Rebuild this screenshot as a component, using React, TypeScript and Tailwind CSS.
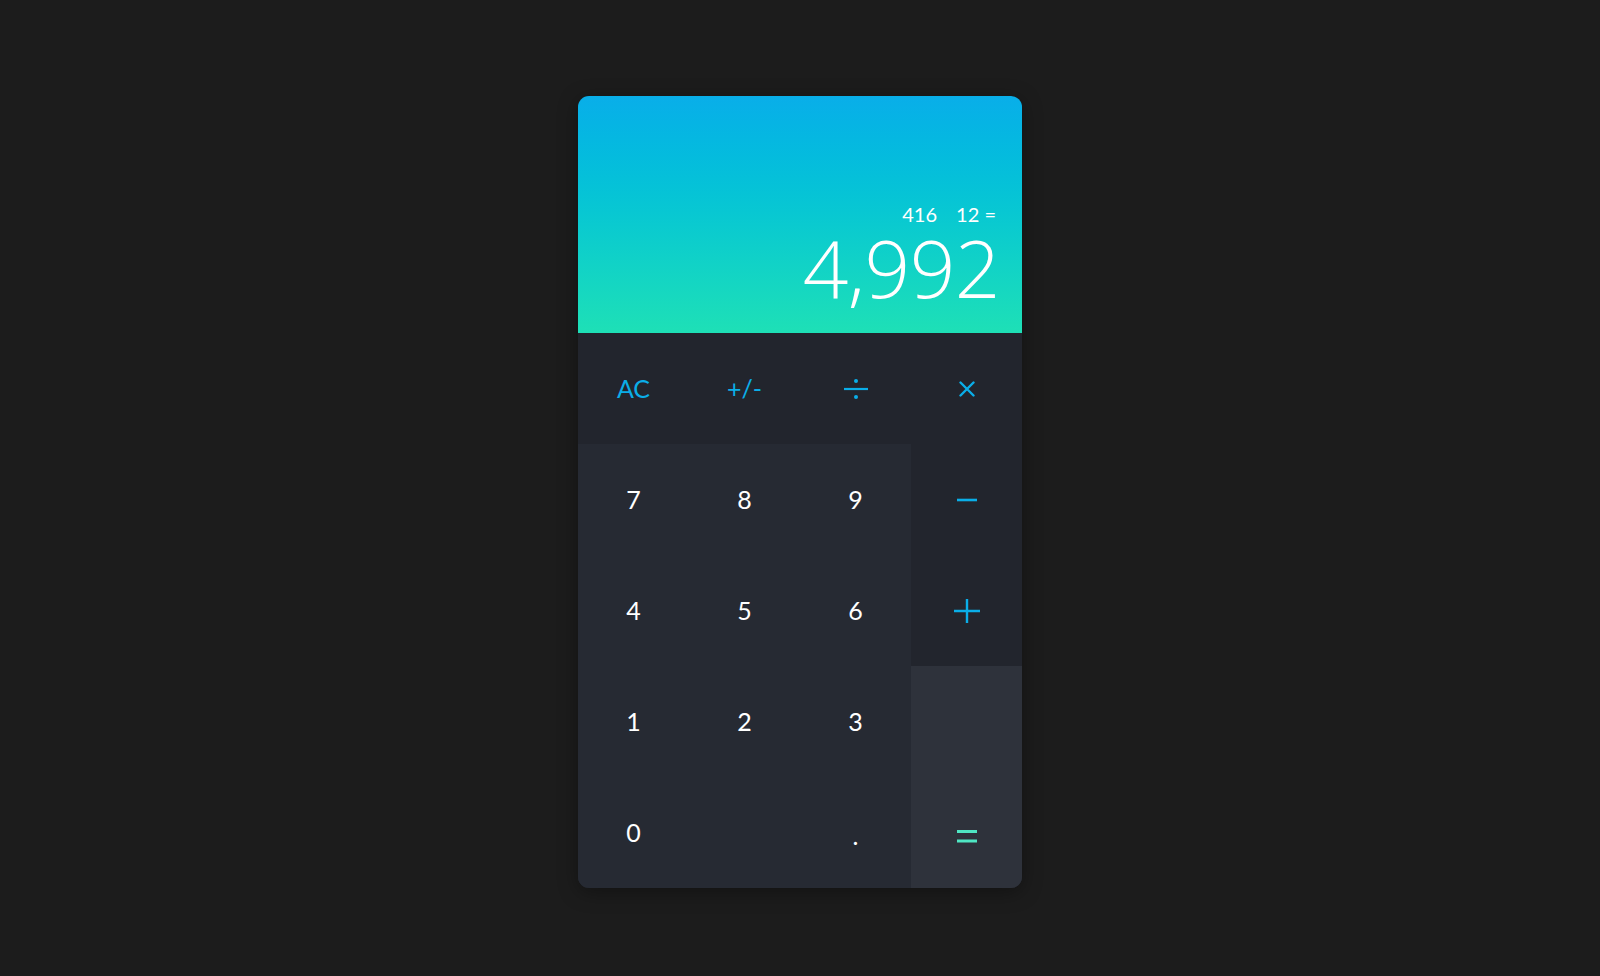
import React from 'react';

const font = { fontFamily: 'Lato, "Noto Sans", sans-serif' };

// --- Operator glyphs ---
const Times = () => (
  <svg width="16" height="16" viewBox="0 0 16 16" fill="none">
    <path d="M1.5 1.5 L14.5 14.5 M14.5 1.5 L1.5 14.5" stroke="#0aaee8" strokeWidth="2.4" strokeLinecap="round" />
  </svg>
);

const Minus = () => (
  <svg width="20" height="4" viewBox="0 0 20 4" fill="none">
    <path d="M0 2 H20" stroke="#0aaee8" strokeWidth="2.6" />
  </svg>
);

const Plus = () => (
  <svg width="26" height="24" viewBox="0 0 26 24" fill="none">
    <path d="M0 12 H26 M13 0 V24" stroke="#0aaee8" strokeWidth="2.4" />
  </svg>
);

const Divide = () => (
  <svg width="24" height="20" viewBox="0 0 24 20" fill="none">
    <path d="M0 10 H24" stroke="#0aaee8" strokeWidth="2.2" />
    <circle cx="12" cy="2" r="2" fill="#0aaee8" />
    <circle cx="12" cy="18" r="2" fill="#0aaee8" />
  </svg>
);

const Equals = () => (
  <svg width="20" height="13" viewBox="0 0 20 13" fill="none">
    <path d="M0 1.6 H20 M0 11 H20" stroke="#4fe6c3" strokeWidth="3" />
  </svg>
);

const Key: React.FC<{ children: React.ReactNode; className?: string }> = ({ children, className }) => (
  <button className={`flex h-[111px] items-center justify-center ${className ?? ''}`}>{children}</button>
);

const digitRows = [
  ['7', '8', '9'],
  ['4', '5', '6'],
  ['1', '2', '3'],
];

export default function App() {
  return (
    <div className="min-h-screen bg-[#1c1c1c] flex items-start justify-center pt-[96px]" style={font}>
      <div className="w-[444px] rounded-[11px] overflow-hidden shadow-[0_4px_20px_rgba(0,0,0,0.35)]">
        {/* --- Display --- */}
        <div className="h-[237px] bg-gradient-to-b from-[#09aee9] to-[#1ee0b6] flex flex-col items-end justify-end pr-[22px] pb-[35px] text-white">
          <div className="flex text-[20px] leading-none mr-[4px]">
            <span>416</span>
            <span className="ml-[19px]">12 =</span>
          </div>
          <div
            className="text-[80px] font-light leading-[62px] mt-[12px] tracking-[-0.5px]"
            style={{ fontFamily: '"Open Sans", Lato, sans-serif' }}
          >
            4,992
          </div>
        </div>

        {/* --- Keypad --- */}
        <div className="grid grid-cols-4 grid-rows-[repeat(5,111px)] bg-[#22252d] text-[25px]">
          <Key className="text-[#0aaee8]">AC</Key>
          <Key className="text-[#0aaee8]">+/-</Key>
          <Key><Divide /></Key>
          <Key><Times /></Key>

          <div className="col-span-3 row-span-4 grid grid-cols-3 grid-rows-[repeat(4,111px)] bg-[#262a33] text-white">
            {digitRows.flat().map((d) => (
              <Key key={d}>{d}</Key>
            ))}
            <Key>0</Key>
            <Key>{''}</Key>
            <Key><span className="mt-[6px]">.</span></Key>
          </div>

          <Key><Minus /></Key>
          <Key><Plus /></Key>
          <div className="row-span-2 bg-[#2e323b] flex flex-col justify-end">
            <Key className="pt-[8px]"><Equals /></Key>
          </div>
        </div>
      </div>
    </div>
  );
}
